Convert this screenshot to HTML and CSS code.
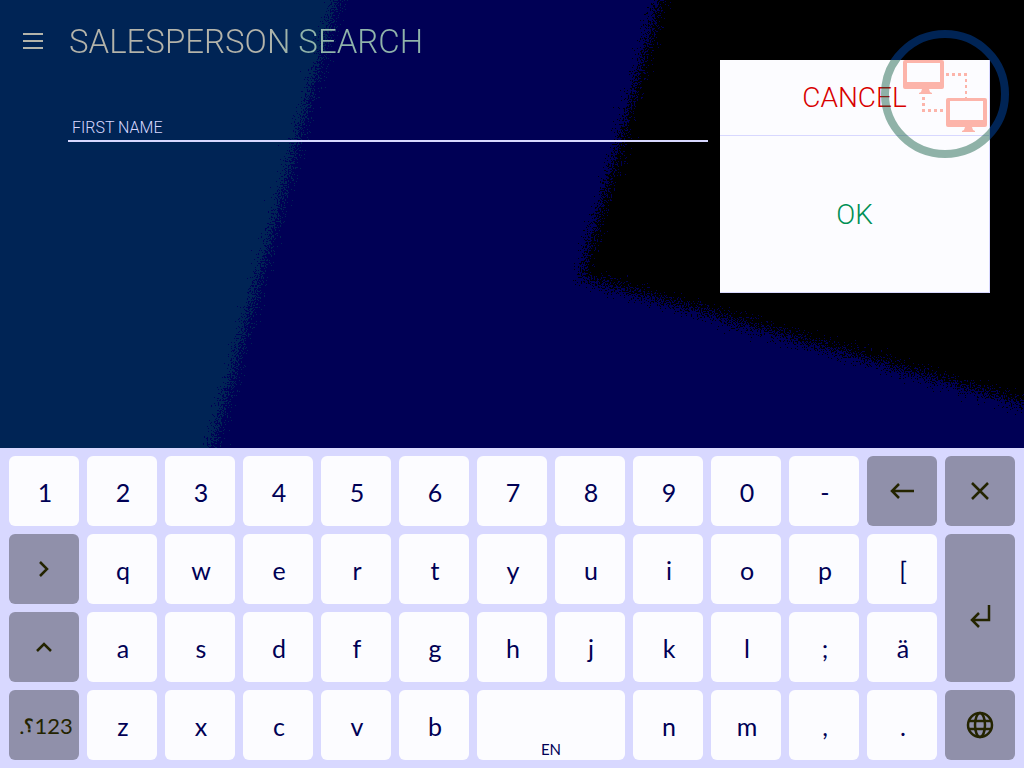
FILE: index.html
```html
<!DOCTYPE html>
<html lang="en">
<head>
<meta charset="utf-8">
<meta name="viewport" content="width=device-width, initial-scale=1">
<title>Salesperson search</title>
<link rel="stylesheet" href="styles.css">
</head>
<body>
<main class="stage">
  <svg class="backdrop" viewBox="0 0 1024 448" preserveAspectRatio="none" aria-hidden="true">
    <defs>
      <filter id="grain" filterUnits="userSpaceOnUse" x="-40" y="-40" width="1104" height="528" color-interpolation-filters="sRGB">
        <feTurbulence type="fractalNoise" baseFrequency="0.7" numOctaves="2" seed="4" result="noise"/>
        <feDisplacementMap in="SourceGraphic" in2="noise" scale="48" xChannelSelector="R" yChannelSelector="G"/>
      </filter>
    </defs>
    <g filter="url(#grain)" shape-rendering="crispEdges">
      <rect x="-60" y="-60" width="1144" height="568" fill="#000055"/>
      <path d="M-60-60H353L195 508H-60Z" fill="#002455"/>
      <path d="M677-60L581 277L1084 421V-60Z" fill="#000000"/>
    </g>
  </svg>

  <section class="content">
    <header class="topbar">
      <button class="menu" type="button" aria-label="Menu">
        <svg width="20" height="16" viewBox="0 0 20 16" aria-hidden="true"><path d="M0 1H20M0 8H20M0 15H20" stroke="currentColor" stroke-width="2"/></svg>
      </button>
      <h1 class="title">SALESPERSON SEARCH</h1>
    </header>
    <input class="field" type="text" aria-label="First name" placeholder="FIRST NAME">
  </section>

  <div class="actions">
    <button class="action cancel" type="button">CANCEL</button>
    <button class="action ok" type="button">OK</button>
  </div>

  <svg class="badge" width="128" height="128" viewBox="0 0 128 128" role="img" aria-label="Network connection">
    <defs>
      <clipPath id="over-panel"><path d="M0 30H109V128H0Z"/></clipPath>
      <clipPath id="over-dark"><path d="M0 0H128V128H109V30H0Z"/></clipPath>
    </defs>
    <circle cx="64" cy="64" r="60" fill="none" stroke="#005036" stroke-opacity=".43" stroke-width="8" clip-path="url(#over-panel)"/>
    <circle cx="64" cy="64" r="60" fill="none" stroke="#002455" stroke-width="8" clip-path="url(#over-dark)"/>
    <g fill="#fcb4aa">
      <path fill-rule="evenodd" d="M24 30H61Q63 30 63 32V57Q63 59 61 59H48L49 62L51 63V64H38V63L40 62L41 59H24Q22 59 22 57V32Q22 30 24 30ZM26 33V52H59V33Z"/>
      <path fill-rule="evenodd" d="M67 68H104Q106 68 106 70V95Q106 97 104 97H91L92 100L94 101V102H81V101L83 100L84 97H67Q65 97 65 95V70Q65 68 67 68ZM69 71V90H102V71Z"/>
    </g>
    <g fill="none" stroke="#fcb4aa">
      <path d="M65 44.500H86" stroke-width="3" stroke-dasharray="3 3"/>
      <path d="M85 43V68" stroke-width="2" stroke-dasharray="3 3"/>
      <path d="M42.500 67V82" stroke-width="3" stroke-dasharray="3 3"/>
      <path d="M41 80.500H65" stroke-width="3" stroke-dasharray="3 3"/>
    </g>
  </svg>
</main>

<section class="keyboard" aria-label="Keyboard">
  <button class="key" type="button">1</button>
  <button class="key" type="button">2</button>
  <button class="key" type="button">3</button>
  <button class="key" type="button">4</button>
  <button class="key" type="button">5</button>
  <button class="key" type="button">6</button>
  <button class="key" type="button">7</button>
  <button class="key" type="button">8</button>
  <button class="key" type="button">9</button>
  <button class="key" type="button">0</button>
  <button class="key" type="button">-</button>
  <button class="key special" type="button" aria-label="Backspace"><svg width="26" height="18" viewBox="0 0 26 18" aria-hidden="true"><path d="M25 9H3M10 2L3 9L10 16"/></svg></button>
  <button class="key special" type="button" aria-label="Close"><svg width="20" height="20" viewBox="0 0 20 20" aria-hidden="true"><path d="M2 2L18 18M18 2L2 18"/></svg></button>

  <button class="key special" type="button" aria-label="Next"><svg width="16" height="18" viewBox="0 0 16 18" aria-hidden="true"><path d="M4 2L11 9L4 16"/></svg></button>
  <button class="key" type="button">q</button>
  <button class="key" type="button">w</button>
  <button class="key" type="button">e</button>
  <button class="key" type="button">r</button>
  <button class="key" type="button">t</button>
  <button class="key" type="button">y</button>
  <button class="key" type="button">u</button>
  <button class="key" type="button">i</button>
  <button class="key" type="button">o</button>
  <button class="key" type="button">p</button>
  <button class="key" type="button">[</button>
  <button class="key special enter" type="button" aria-label="Enter"><svg width="22" height="24" viewBox="0 0 22 24" aria-hidden="true"><path d="M20 1V16H3M10 9L3 16L10 23"/></svg></button>

  <button class="key special" type="button" aria-label="Shift"><svg width="18" height="12" viewBox="0 0 18 12" aria-hidden="true"><path d="M2 10L9 3L16 10"/></svg></button>
  <button class="key" type="button">a</button>
  <button class="key" type="button">s</button>
  <button class="key" type="button">d</button>
  <button class="key" type="button">f</button>
  <button class="key" type="button">g</button>
  <button class="key" type="button">h</button>
  <button class="key" type="button">j</button>
  <button class="key" type="button">k</button>
  <button class="key" type="button">l</button>
  <button class="key" type="button">;</button>
  <button class="key" type="button">ä</button>

  <button class="key special symbols" type="button">.<span class="small">؟</span>123</button>
  <button class="key" type="button">z</button>
  <button class="key" type="button">x</button>
  <button class="key" type="button">c</button>
  <button class="key" type="button">v</button>
  <button class="key" type="button">b</button>
  <button class="key space" type="button">EN</button>
  <button class="key" type="button">n</button>
  <button class="key" type="button">m</button>
  <button class="key" type="button">,</button>
  <button class="key" type="button">.</button>
  <button class="key special" type="button" aria-label="Language"><svg width="28" height="28" viewBox="0 0 28 28" aria-hidden="true"><circle cx="14" cy="14" r="12"/><ellipse cx="14" cy="14" rx="5" ry="12"/><path d="M3 10H25M3 18H25"/></svg></button>
</section>
</body>
</html>
```
FILE: styles.css
```css
* {
  box-sizing: border-box;
}

body {
  display: flex;
  flex-direction: column;
  min-height: 100vh;
  margin: 0;
  background: #000055;
  font-family: Roboto, "Liberation Sans", sans-serif;
}

button,
input {
  margin: 0;
  padding: 0;
  border: 0;
  border-radius: 0;
  background: none;
  font: inherit;
}

.stage {
  position: relative;
  display: grid;
  flex: 1;
  grid-template-columns: 1fr 270px;
  align-items: start;
  gap: 12px;
  padding-right: 34px;
  isolation: isolate;
}

.backdrop {
  position: absolute;
  inset: 0;
  z-index: -1;
  width: 100%;
  height: 100%;
}

.content {
  display: flex;
  flex-direction: column;
}

.topbar {
  display: flex;
  align-items: center;
  height: 82px;
}

.menu {
  display: grid;
  place-items: center;
  width: 66px;
  height: 48px;
  color: #b4b4aa;
}

.title {
  margin: 0 0 0 3px;
  padding-top: 2px;
  background: linear-gradient(90deg, #b4b4aa 55%, #90b4aa 66%);
  background-clip: text;
  color: transparent;
  font-size: 33px;
  font-weight: 300;
  line-height: 40px;
}

.field {
  height: 60px;
  margin-left: 68px;
  padding: 32px 4px 0;
  border-bottom: 2px solid #d8d8ff;
  outline: 0;
  color: #d8d8ff;
  font-size: 16px;
  font-weight: 300;
}

.field::placeholder {
  color: #d8d8ff;
  opacity: 1;
}

.actions {
  display: grid;
  grid-template-rows: 76px 157px;
  margin-top: 60px;
  border-right: 1px solid #d8d8ff;
  background: #fcfcff;
}

.action {
  border-bottom: 1px solid #d8d8ff;
  font-size: 28px;
  font-weight: 300;
}

.cancel {
  color: #d80000;
}

.ok {
  color: #009055;
}

.badge {
  position: absolute;
  top: 30px;
  right: 15px;
}

.keyboard {
  display: grid;
  grid-template-columns: repeat(13, 1fr);
  grid-auto-rows: 70px;
  gap: 8px;
  padding: 8px 9px;
  background: #d8d8ff;
}

.key {
  display: flex;
  align-items: center;
  justify-content: center;
  min-width: 0;
  padding: 1px 0 0 2px;
  border-radius: 6px;
  background: #fcfcff;
  color: #000055;
  font-family: Lato, sans-serif;
  font-size: 25px;
}

.special {
  padding: 0;
  background: #9090aa;
  color: #242400;
}

.special svg {
  fill: none;
  stroke: currentColor;
  stroke-width: 2.5;
}

.enter {
  grid-row: span 2;
  padding-top: 16px;
}

.symbols {
  padding-left: 4px;
  font-size: 22px;
}

.small {
  font-size: 18px;
  font-weight: 700;
}

.space {
  grid-column: span 2;
  align-items: flex-end;
  padding: 0 0 2px;
  font-size: 15px;
}
```
